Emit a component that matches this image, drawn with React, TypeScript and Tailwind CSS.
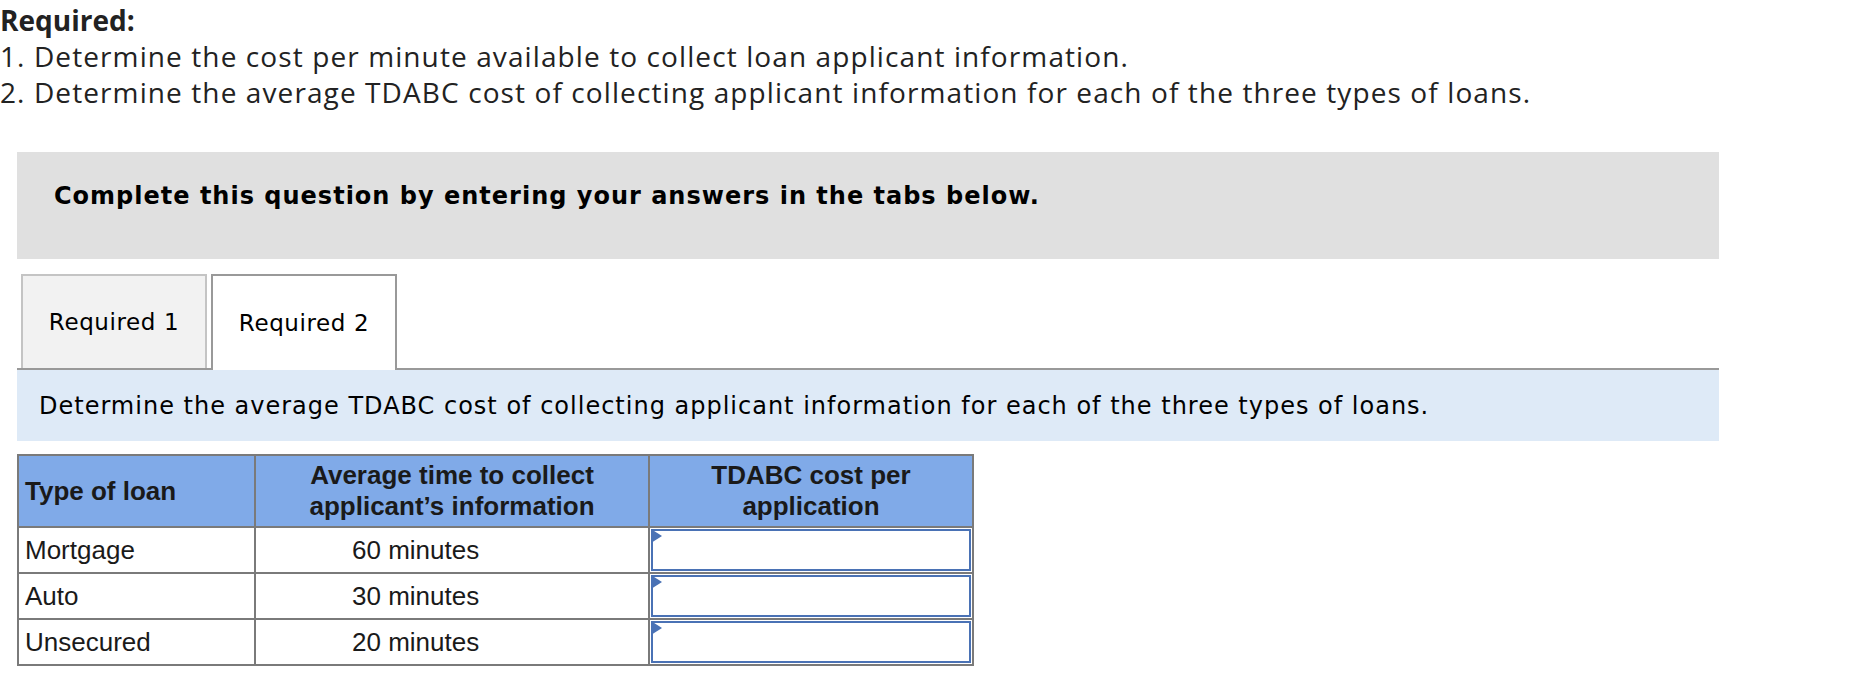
import React from "react";

const rows = [
  { type: "Mortgage", time: "60 minutes" },
  { type: "Auto", time: "30 minutes" },
  { type: "Unsecured", time: "20 minutes" },
];

function AnswerCell() {
  return (
    <td className="border-2 border-[#7a7a7a] p-0 h-[46px]">
      <div className="relative mx-[1px] h-[42px] border-2 border-[#4a72b5] bg-white">
        <span className="absolute -left-[2px] -top-[2px] h-0 w-0 border-y-[7px] border-l-[11px] border-y-transparent border-l-[#4a72b5]" />
        <input className="h-full w-full bg-transparent px-2 outline-none" aria-label="TDABC cost per application" />
      </div>
    </td>
  );
}

export default function App() {
  return (
    <div className="min-h-[676px] w-full bg-white text-[#111]">
      <div className="pt-[2px] text-[28px] leading-[36px] text-[#222]" style={{ fontFamily: "'Open Sans', Lato, sans-serif" }}>
        <p className="font-bold">Required:</p>
        <p className="tracking-[1.1px]">1. Determine the cost per minute available to collect loan applicant information.</p>
        <p className="tracking-[1.1px]">
          2. Determine the average TDABC cost of collecting applicant information for each of the three types of loans.
        </p>
      </div>

      <div className="ml-[17px] mt-[42px] w-[1702px]" style={{ fontFamily: "'DejaVu Sans', Verdana, sans-serif" }}>
        <div className="h-[107px] bg-[#e0e0e0] pl-[37px] pt-[30px]">
          <p className="text-[24px] font-bold leading-[28px] tracking-[1px] text-black">
            Complete this question by entering your answers in the tabs below.
          </p>
        </div>

        <div className="mt-[15px] flex items-end gap-[4px] border-b-2 border-[#999] pl-[4px]">
          <button className="flex h-[94px] w-[186px] items-center justify-center border-2 border-b-0 border-[#c4c4c4] bg-[#f2f2f2] text-[23px] tracking-[0.6px] text-black">
            Required 1
          </button>
          <button className="-mb-[2px] flex h-[96px] w-[186px] items-center justify-center border-2 border-b-0 border-[#999] bg-white text-[23px] tracking-[0.6px] text-black">
            Required 2
          </button>
        </div>

        <div className="flex h-[71px] items-center bg-[#deeaf7] pl-[22px]">
          <p className="text-[24px] tracking-[1px] text-black">
            Determine the average TDABC cost of collecting applicant information for each of the three types of loans.
          </p>
        </div>
      </div>

      <table
        className="ml-[17px] mt-[13px] border-collapse text-[26px] text-[#1a1a1a]"
        style={{ fontFamily: "'Liberation Sans', Arial, sans-serif" }}
      >
        <thead>
          <tr className="h-[72px] bg-[#80aae8] leading-[31px]">
            <th className="w-[237px] border-2 border-[#7a7a7a] pl-[6px] text-left font-bold">Type of loan</th>
            <th className="w-[394px] border-2 border-[#7a7a7a] text-center font-bold">
              Average time to collect
              <br />
              applicant’s information
            </th>
            <th className="w-[324px] border-2 border-[#7a7a7a] text-center font-bold">
              TDABC cost per
              <br />
              application
            </th>
          </tr>
        </thead>
        <tbody>
          {rows.map((r) => (
            <tr key={r.type} className="h-[46px]">
              <td className="border-2 border-[#7a7a7a] pl-[6px]">{r.type}</td>
              <td className="border-2 border-[#7a7a7a] pl-[96px]">{r.time}</td>
              <AnswerCell />
            </tr>
          ))}
        </tbody>
      </table>
    </div>
  );
}
